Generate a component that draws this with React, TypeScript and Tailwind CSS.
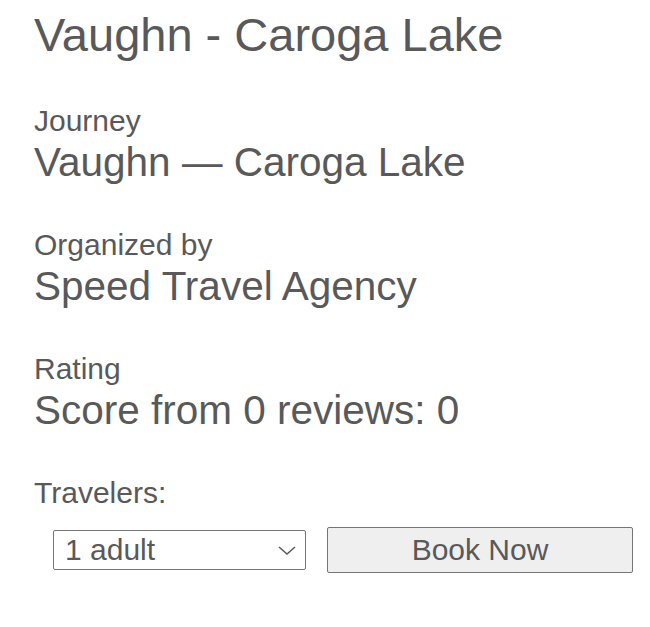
import * as React from "react"

const details = [
  { label: "Journey", value: "Vaughn — Caroga Lake" },
  { label: "Organized by", value: "Speed Travel Agency" },
  { label: "Rating", value: "Score from 0 reviews: 0" },
]

export default function App() {
  const [travelers, setTravelers] = React.useState("1")

  return (
    <div className="min-h-[627px] bg-white px-[34px] pt-[7px] font-['Liberation_Sans',Arial,sans-serif] text-[#595959]">
      <h1 className="text-[47px] leading-[55px] font-normal">Vaughn - Caroga Lake</h1>

      <div className="mt-[41px] flex flex-col gap-[42px]">
        {details.map((d) => (
          <div key={d.label}>
            <div className="text-[30px] leading-[36px]">{d.label}</div>
            <div className="text-[40.5px] leading-[46px]">{d.value}</div>
          </div>
        ))}

        <div>
          <div className="text-[30px] leading-[36px]">Travelers:</div>
          <div className="mt-[16px] flex items-center gap-[21px] pl-[19px]">
            <div className="relative w-[253px] shrink-0">
              <select
                value={travelers}
                onChange={(e) => setTravelers(e.target.value)}
                className="h-[40px] w-full appearance-none rounded-[2px] border border-[#767676] bg-white pl-[11px] text-[30px] leading-[38px] text-[#595959] outline-none"
              >
                <option value="1">1 adult</option>
                <option value="2">2 adults</option>
                <option value="3">3 adults</option>
              </select>
              <svg
                className="pointer-events-none absolute right-[10px] top-[16px]"
                width="18"
                height="9"
                viewBox="0 0 18 9"
                fill="none"
              >
                <path d="M1 1l8 7 8-7" stroke="#595959" strokeWidth="1.5" />
              </svg>
            </div>
            <button className="h-[46px] w-[306px] shrink-0 rounded-[2px] border border-[#767676] bg-[#efefef] text-[30px] leading-[44px] text-[#595959]">
              Book Now
            </button>
          </div>
        </div>
      </div>
    </div>
  )
}
